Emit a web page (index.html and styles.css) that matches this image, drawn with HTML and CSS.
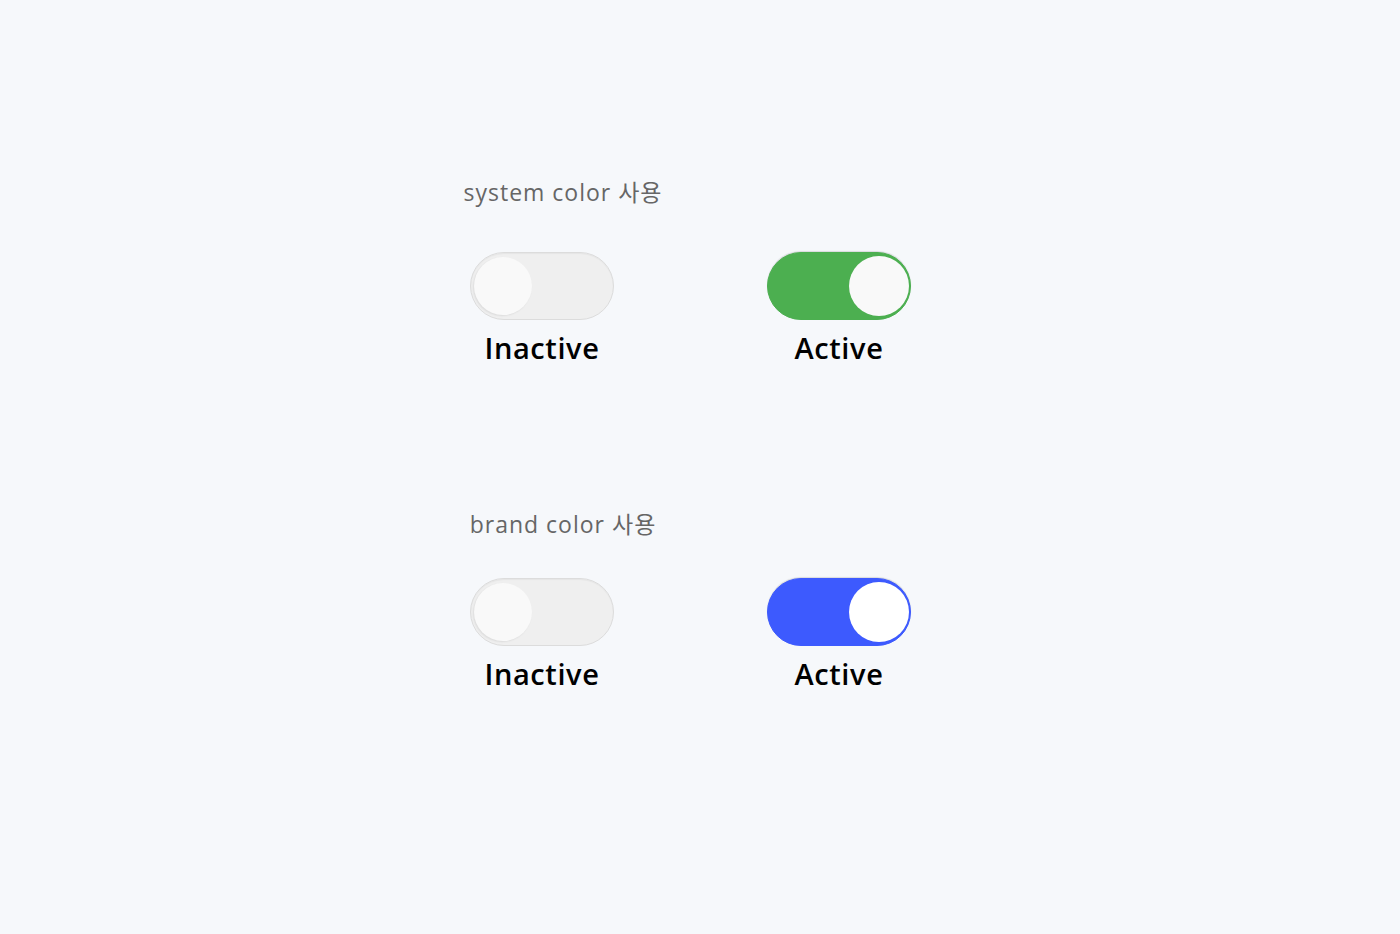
FILE: index.html
```html
<!DOCTYPE html>
<html lang="ko">
<head>
<meta charset="utf-8">
<title>Toggle</title>
<link rel="stylesheet" href="styles.css">
</head>
<body>
<main class="page">
  <section class="group">
    <div class="group-title">system color 사용</div>
    <div class="row">
      <div class="item">
        <div class="switch off"><span class="knob"></span></div>
        <div class="caption">Inactive</div>
      </div>
      <div class="item">
        <div class="switch on green"><span class="knob"></span></div>
        <div class="caption">Active</div>
      </div>
    </div>
  </section>
  <section class="group group-second">
    <div class="group-title">brand color 사용</div>
    <div class="row">
      <div class="item">
        <div class="switch off"><span class="knob"></span></div>
        <div class="caption">Inactive</div>
      </div>
      <div class="item">
        <div class="switch on blue"><span class="knob white"></span></div>
        <div class="caption">Active</div>
      </div>
    </div>
  </section>
</main>
</body>
</html>
```
FILE: styles.css
```css
html, body {
  margin: 0;
  padding: 0;
}
body {
  background: #f6f8fb;
  width: 1400px;
  height: 934px;
  font-family: "Open Sans", "Noto Sans CJK KR", sans-serif;
}
.page {
  padding-top: 175px;
  padding-left: 470px;
}
.group-second {
  margin-top: 141px;
}
.group-title {
  width: 186px;
  margin-left: -8px;
  padding-left: 8px;
  box-sizing: content-box;
  text-align: center;
  font-size: 23px;
  line-height: 34px;
  color: #666;
  font-weight: 400;
  letter-spacing: 1px;
  white-space: nowrap;
  display: flex;
  justify-content: center;
}
.row {
  display: flex;
  gap: 153px;
  margin-top: 43px;
}
.group-second .row {
  margin-top: 37px;
}
.item {
  width: 144px;
  display: flex;
  flex-direction: column;
  align-items: center;
}
.switch {
  box-sizing: border-box;
  width: 144px;
  height: 68px;
  border-radius: 34px;
  display: flex;
  align-items: center;
  padding: 0 3px;
}
.switch.off {
  background: #efefef;
  border: 1px solid #dcdcdc;
  box-shadow: inset 0 1px 1px rgba(0,0,0,0.04);
}
.switch.on {
  justify-content: flex-end;
  padding: 0 1px;
}
.switch.green {
  background: #4caf50;
  border: 1px solid #4caf50;
  box-shadow: 0 -1px 1px rgba(0,0,0,0.12);
}
.switch.blue {
  background: #3d5afe;
  border: 1px solid #3d5afe;
  box-shadow: 0 -1px 1px rgba(0,0,0,0.12);
}
.knob {
  display: block;
  width: 58px;
  height: 58px;
  border-radius: 50%;
  background: #f9f9f9;
  box-shadow: -1px 1px 2px rgba(0,0,0,0.08);
}
.switch.on .knob {
  width: 60px;
  height: 60px;
  box-shadow: none;
}
.knob.white {
  background: #ffffff;
}
.caption {
  margin-top: 10px;
  font-size: 29px;
  line-height: 36px;
  font-weight: 600;
  letter-spacing: 0.6px;
  color: #000;
}
```
